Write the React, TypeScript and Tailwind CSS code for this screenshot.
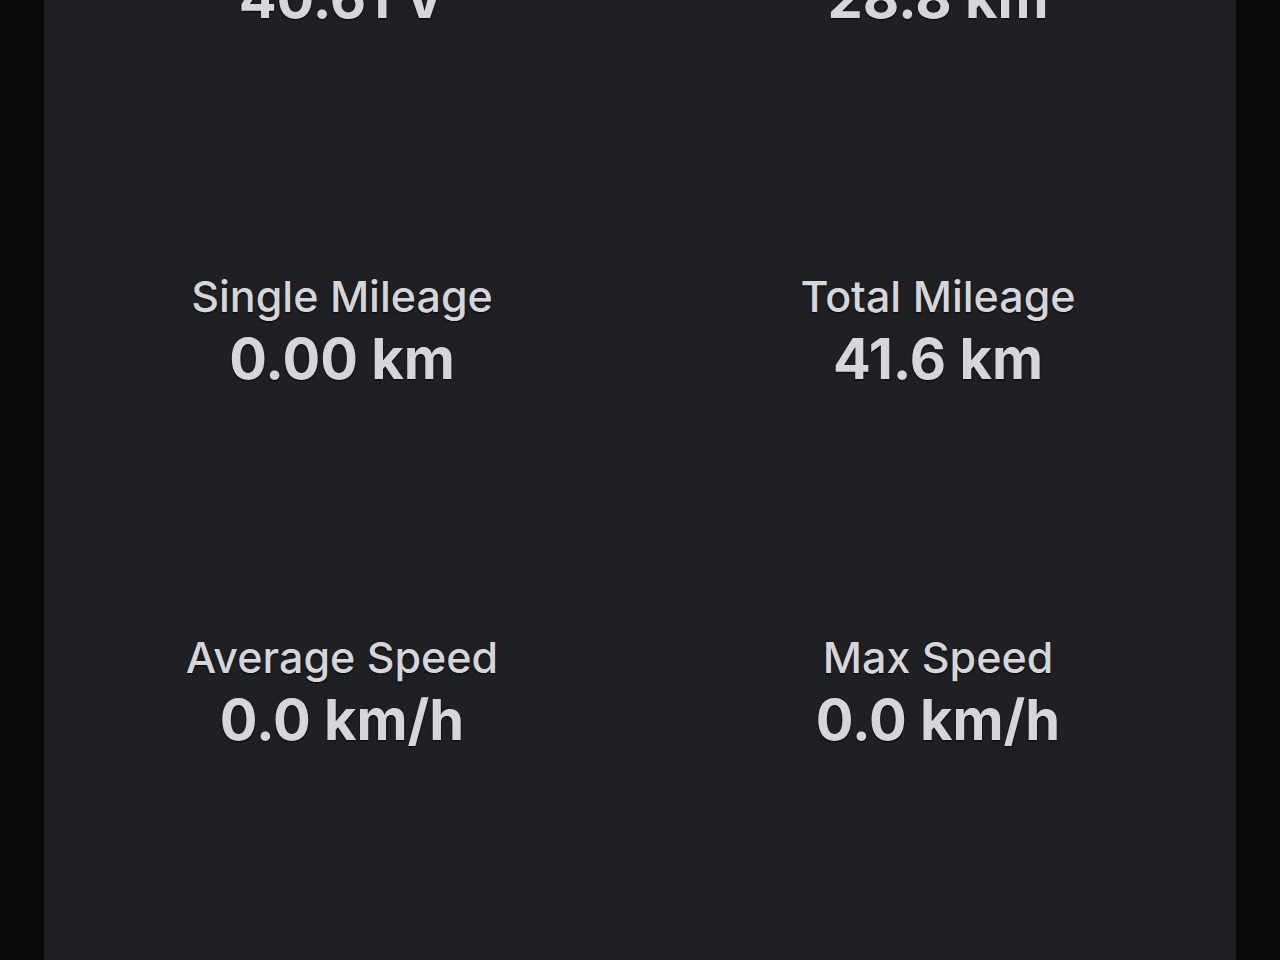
import React from "react";

const rows: [string, string, string, string][] = [
  ["Battery Voltage", "40.61 V", "Range", "28.8 km"],
  ["Single Mileage", "0.00 km", "Total Mileage", "41.6 km"],
  ["Average Speed", "0.0 km/h", "Max Speed", "0.0 km/h"],
];

function Stat({ label, value }: { label: string; value: string }) {
  return (
    <div className="flex flex-col items-center justify-center">
      <div className="text-[43px] leading-[50px] font-medium text-[#d6d6da] [text-shadow:0_1px_2px_rgba(0,0,0,0.8)]">
        {label}
      </div>
      <div className="mt-[6px] text-[56px] leading-[64px] font-bold text-[#d6d6da] [text-shadow:0_1px_2px_rgba(0,0,0,0.8)]">
        {value}
      </div>
    </div>
  );
}

export default function App() {
  return (
    <div
      className="w-[1280px] h-[960px] overflow-hidden bg-[#080808] flex justify-center"
      style={{ fontFamily: "Inter, 'Noto Sans', sans-serif" }}
    >
      <div className="w-[1192px] h-full bg-[#1f2024] overflow-hidden">
        <div className="mt-[-211px] flex flex-col">
          {rows.map((r) => (
            <div key={r[0]} className="h-[361px] grid grid-cols-2 items-center">
              <Stat label={r[0]} value={r[1]} />
              <Stat label={r[2]} value={r[3]} />
            </div>
          ))}
        </div>
      </div>
    </div>
  );
}
